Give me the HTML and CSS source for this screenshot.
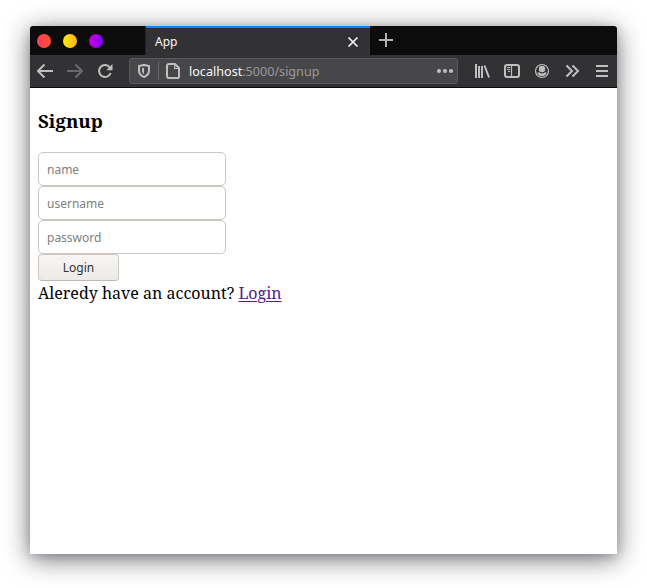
FILE: index.html
```html
<!DOCTYPE html>
<html lang="en">
<head>
<meta charset="utf-8">
<title>App</title>
<link rel="stylesheet" href="styles.css">
</head>
<body>
<div class="window">
  <div class="tabbar">
    <div class="controls"><span class="dot close"></span><span class="dot min"></span><span class="dot max"></span></div>
    <div class="tab"><span>App</span>
      <svg width="12" height="12" viewBox="0 0 12 12"><path d="M1.500 1.500l9 9M10.500 1.500l-9 9" stroke="#f5f5f5" stroke-width="1.700"/></svg>
    </div>
    <svg class="plus" width="14" height="14" viewBox="0 0 14 14"><path d="M7 0v14M0 7h14" stroke="#b4b4b5" stroke-width="2"/></svg>
  </div>
  <div class="toolbar">
    <div class="nav">
      <svg width="16" height="16" viewBox="0 0 16 16"><path d="M16 8H1.500M7.500 1.500L1 8l6.500 6.500" class="s"/></svg>
      <svg class="dim" width="16" height="16" viewBox="0 0 16 16"><path d="M0 8h14.500M8.500 1.500L15 8l-6.500 6.500" class="s"/></svg>
      <svg width="16" height="16" viewBox="0 0 16 16"><path d="M12.800 4.300A6 6 0 1 0 13.700 10" class="s"/><path d="M15.500 1v6.200H9.300z" class="f"/></svg>
    </div>
    <div class="urlbar">
      <svg class="shield" width="12" height="14" viewBox="0 0 12 14"><path d="M6 .900L11 2v4.500c0 3-1.800 5.200-5 6.600-3.200-1.400-5-3.600-5-6.600V2z" class="s"/><path d="M6 3.800v6.500C4.500 9.200 4 8.200 4 6.500V4.200z" class="f"/></svg>
      <span class="sep"></span>
      <svg class="page" width="14" height="16" viewBox="0 0 14 16"><path d="M3 1h6l4 4v8.500A1.500 1.500 0 0 1 11.500 15H3a2 2 0 0 1-2-2V3a2 2 0 0 1 2-2z" class="s"/><path d="M8.700 1v4.500H13" class="s thin"/></svg>
      <span class="url">localhost<span class="path">:5000/signup</span></span>
      <svg class="more" width="16" height="4" viewBox="0 0 16 4"><circle cx="2" cy="2" r="2" class="f"/><circle cx="8" cy="2" r="2" class="f"/><circle cx="14" cy="2" r="2" class="f"/></svg>
    </div>
    <div class="tools">
      <svg width="16" height="16" viewBox="0 0 16 16"><path d="M2 1v14M5 3v12M8 3v12M10.500 2.500L15 14.500" class="s"/></svg>
      <svg width="16" height="16" viewBox="0 0 16 16"><rect x="1" y="2" width="14" height="12" rx="2" class="s"/><path d="M7.500 2v12M3 4.500h3M3 6.500h3M4 8.500h2" class="s thin"/></svg>
      <svg width="16" height="16" viewBox="0 0 16 16"><circle cx="8" cy="8" r="6.500" class="s thin"/><circle cx="8" cy="6" r="3.200" class="f"/><path d="M3.200 9.500h2.300a4 4 0 0 0 5 0h2.300C12 12 10.300 13.300 8 13.300S4 12 3.200 9.500z" class="f"/></svg>
      <svg width="16" height="16" viewBox="0 0 16 16"><path d="M2.500 2.500L8 8l-5.500 5.500M8.500 2.500L14 8l-5.500 5.500" class="s"/></svg>
      <svg width="16" height="16" viewBox="0 0 16 16"><path d="M2 3h12M2 8h12M2 13h12" class="s"/></svg>
    </div>
  </div>
  <main class="content">
    <h3>Signup</h3>
    <form>
      <input type="text" placeholder="name">
      <input type="text" placeholder="username">
      <input type="password" placeholder="password">
      <button type="button">Login</button>
    </form>
    <p>Aleredy have an account? <a href="#">Login</a></p>
  </main>
</div>
</body>
</html>
```

FILE: styles.css
```css
* { box-sizing: border-box; }
body { margin: 0; padding: 26px 30px 34px; background: #fff; height: 588px; overflow: hidden; }
.window {
  width: 587px; height: 528px; background: #fff; border-radius: 3px 3px 0 0;
  box-shadow: 0 5px 26px rgba(20, 22, 28, .6), 0 2px 10px rgba(20, 22, 28, .15);
}
.tabbar { display: flex; height: 29px; background: #0c0c0c; border-radius: 3px 3px 0 0; font: 12px "Noto Sans", sans-serif; }
.controls { display: flex; gap: 12px; width: 116px; padding: 8px 0 0 7px; border-right: 1px solid #252526; }
.dot { width: 14px; height: 14px; border-radius: 50%; }
.close { background: linear-gradient(90deg, #ff3b58, #ff512f); }
.min { background: linear-gradient(90deg, #fff000, #ffad2e); }
.max { background: linear-gradient(90deg, #c400d4, #8600ff); }
.tab {
  display: flex; align-items: center; justify-content: space-between; width: 224px;
  padding: 0 11px 0 9px; background: #323234; border-top: 2px solid #0a84ff; color: #f9f9fa;
}
.plus { margin: 7px 0 0 9px; }
.toolbar { display: flex; align-items: center; height: 33px; background: #323234; border-bottom: 1px solid #0c0c0d; }
.nav { display: flex; gap: 14px; width: 99px; padding-left: 7px; }
.dim { opacity: .4; }
.urlbar {
  display: flex; align-items: center; width: 329px; height: 26px; padding: 0 4px 0 8px;
  background: #474749; border: 1px solid #5a5a5d; border-radius: 3px;
}
.sep { width: 1px; height: 18px; margin: 0 7px 0 8px; background: #66666d; }
.url { flex: 1; margin-left: 9px; color: #f9f9fa; font: 12.600px "Noto Sans", sans-serif; }
.path { color: #98989a; }
.tools { display: flex; gap: 14px; margin-left: 16px; }
.s { fill: none; stroke: #bfbfc0; stroke-width: 2; }
.thin { stroke-width: 1.200; }
.f { fill: #bfbfc0; }
.content { padding: 0 8px; color: #000; font: 16px/22px "Noto Serif", "DejaVu Serif", serif; }
h3 { margin: 0; padding: 20px 0 18px; font-size: 18.720px; line-height: 26px; }
form { display: flex; flex-direction: column; align-items: flex-start; }
input {
  width: 188px; height: 34px; padding: 0 8px; border: 1px solid #cdc7c2; border-radius: 5px;
  background: #fff; font: 12px "Noto Sans", sans-serif;
}
input::placeholder { color: #808080; opacity: 1; }
button {
  width: 81px; height: 27px; padding: 0; border: 1px solid #cdc7c2; border-bottom-color: #bfb8b1; border-radius: 4px;
  background: linear-gradient(#f6f5f4, #edebe9); color: #2e3436; font: 12px "Noto Sans", sans-serif;
}
p { margin: 1px 0 0; white-space: nowrap; }
a { color: #551a8b; text-underline-offset: 2px; text-decoration-thickness: 1px; }
```
